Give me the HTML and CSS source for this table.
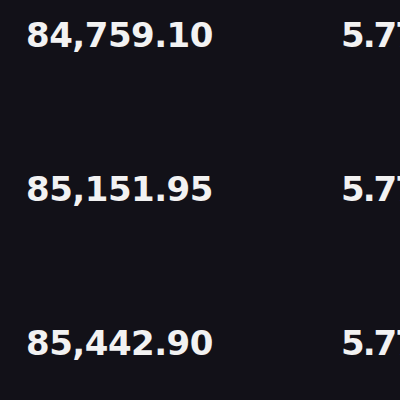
FILE: index.html
```html
<!DOCTYPE html>
<html>
<head>
<meta charset="utf-8">
<link rel="stylesheet" href="styles.css">
</head>
<body>
<div class="table">
  <div class="row"><span class="price">84,759.10</span><span class="amount">5.77</span></div>
  <div class="row"><span class="price">85,151.95</span><span class="amount">5.77</span></div>
  <div class="row"><span class="price">85,442.90</span><span class="amount">5.77</span></div>
</div>
</body>
</html>
```
FILE: styles.css
```css
html, body {
  margin: 0;
  padding: 0;
  background: #121118;
  width: 400px;
  height: 400px;
  overflow: hidden;
}
.table {
  display: flex;
  flex-direction: column;
  padding: 0 0 0 26px;
  margin-top: -42px;
}
.row {
  display: flex;
  align-items: center;
  height: 154px;
  white-space: nowrap;
  overflow: hidden;
}
.price, .amount {
  flex-shrink: 0;
  font-family: "DejaVu Sans", sans-serif;
  font-weight: bold;
  font-size: 34px;
  letter-spacing: -0.5px;
  color: #f2f2f2;
}
.price {
  width: 315px;
}
.amount {
  letter-spacing: -2px;
}
```
